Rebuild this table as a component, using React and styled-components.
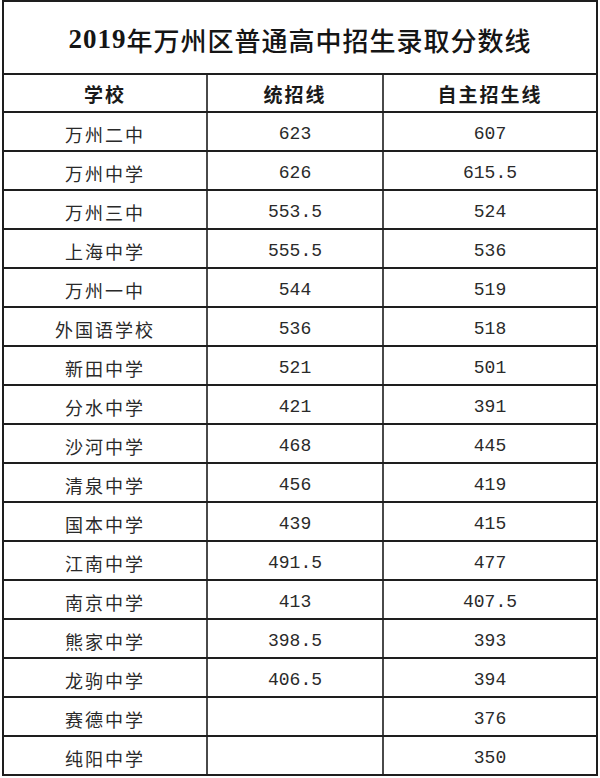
import styled, { createGlobalStyle } from "styled-components";

const rows = [
    ["万州二中", "623", "607"],
    ["万州中学", "626", "615.5"],
    ["万州三中", "553.5", "524"],
    ["上海中学", "555.5", "536"],
    ["万州一中", "544", "519"],
    ["外国语学校", "536", "518"],
    ["新田中学", "521", "501"],
    ["分水中学", "421", "391"],
    ["沙河中学", "468", "445"],
    ["清泉中学", "456", "419"],
    ["国本中学", "439", "415"],
    ["江南中学", "491.5", "477"],
    ["南京中学", "413", "407.5"],
    ["熊家中学", "398.5", "393"],
    ["龙驹中学", "406.5", "394"],
    ["赛德中学", "", "376"],
    ["纯阳中学", "", "350"],
];

export default function App() {
    return (
        <>
            <Global />
            <Table>
                <Title>
                    <Year>2019</Year>年万州区普通高中招生录取分数线
                </Title>
                <Row $head>
                    <Cell $head>学校</Cell>
                    <Cell $head>统招线</Cell>
                    <Cell $head $last>自主招生线</Cell>
                </Row>
                {rows.map(([school, a, b]) => (
                    <Row key={school}>
                        <Cell>{school}</Cell>
                        <Cell $num>{a}</Cell>
                        <Cell $num $last>{b}</Cell>
                    </Row>
                ))}
            </Table>
        </>
    );
}

const Global = createGlobalStyle`
    body{
        margin: 0;
        background: #FFFFFF;
    }
`;

const Table = styled.div`
    box-sizing: border-box;
    width: 596px;
    margin-left: 2px;
    border: 2px solid #1e1e1e;
    border-bottom: none;
    background: #FFFFFF;
    color: #222222;
`;

const Title = styled.div`
    box-sizing: border-box;
    height: 73px;
    padding-top: 4px;
    display: flex;
    align-items: center;
    justify-content: center;
    border-bottom: 2px solid #1e1e1e;
    font-family: "Liberation Serif", "Noto Sans CJK SC", serif;
    font-weight: 500;
    font-size: 26px;
    letter-spacing: 1px;
    color: #151515;
`;

const Year = styled.span`
    font-weight: 700;
    font-size: 27px;
`;

const Row = styled.div`
    display: grid;
    grid-template-columns: 204px 176px 1fr;
    height: ${(p) => (p.$head ? "38px" : "39px")};
    box-sizing: border-box;
    border-bottom: 2px solid #1e1e1e;
`;

const Cell = styled.div`
    display: flex;
    align-items: center;
    justify-content: center;
    border-right: ${(p) => (p.$last ? "none" : "2px solid #4a4a4a")};
    font-family: ${(p) =>
        p.$num ? `"Liberation Mono", monospace` : `"Noto Sans CJK SC", sans-serif`};
    font-weight: ${(p) => (p.$head ? 700 : 400)};
    font-size: ${(p) => (p.$head ? "19px" : "18px")};
    letter-spacing: ${(p) => (p.$num ? "0" : "2px")};
    color: ${(p) => (p.$head ? "#1a1a1a" : "#2a2a2a")};
    padding-top: ${(p) => (p.$head ? "1px" : "4px")};
`;
